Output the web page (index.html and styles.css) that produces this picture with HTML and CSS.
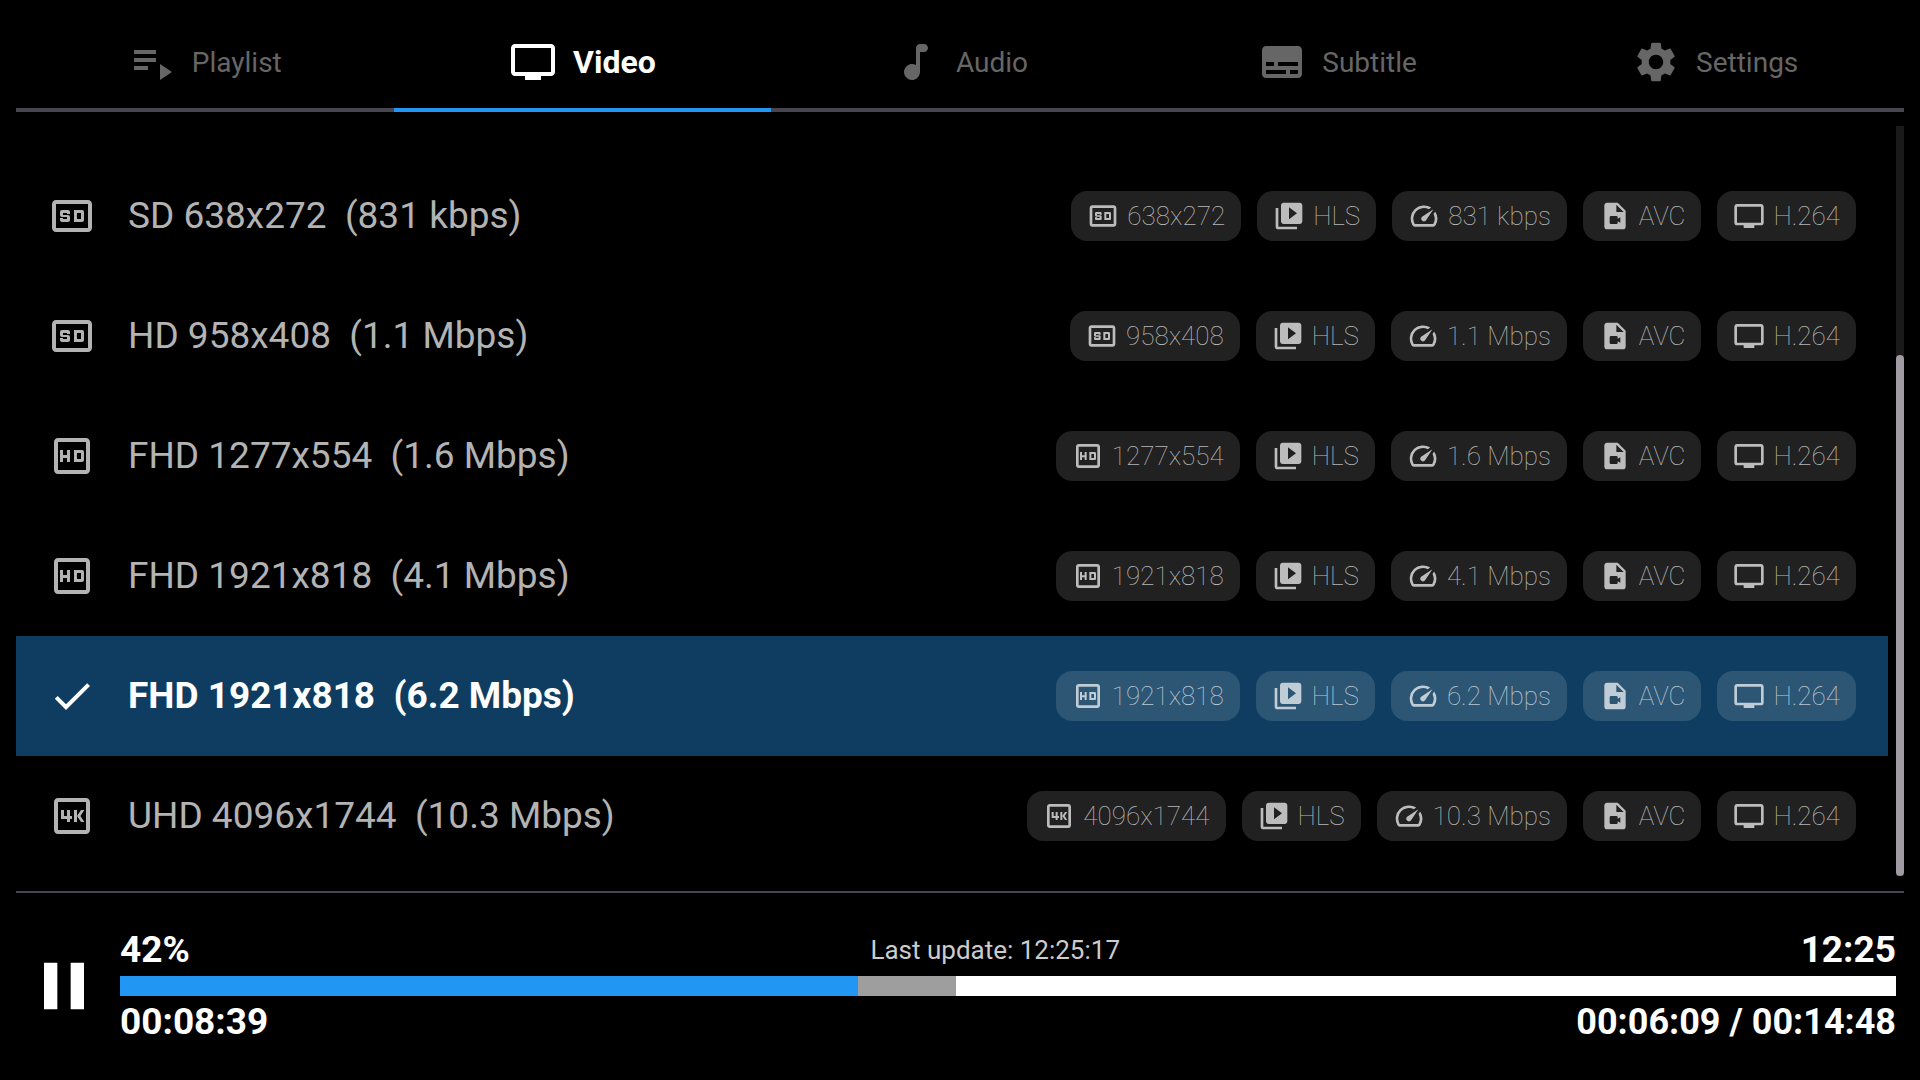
FILE: index.html
```html
<!DOCTYPE html>
<html lang="en">
<head>
<meta charset="utf-8">
<meta name="viewport" content="width=device-width, initial-scale=1">
<title>Video tracks</title>
<link rel="stylesheet" href="styles.css">
</head>
<body>
<svg class="sprite" aria-hidden="true">
  <symbol id="sd" viewBox="0 0 24 24"><path d="M20 4H4c-1.100 0-2 .9-2 2v12c0 1.100.9 2 2 2h16c1.100 0 2-.9 2-2V6c0-1.100-.9-2-2-2zm0 14H4V6h16v12zM7 15h3c.55 0 1-.45 1-1v-1.500c0-.55-.45-1-1-1H7.500v-1h2v.5H11V10c0-.55-.45-1-1-1H7c-.55 0-1 .45-1 1v1.500c0 .55.45 1 1 1h2.500v1h-2V13H6v1c0 .55.45 1 1 1zm11-1v-4c0-.55-.45-1-1-1h-4v6h4c.55 0 1-.45 1-1zm-1.500-.5h-2v-3h2v3z"/></symbol>
  <symbol id="hd" viewBox="0 0 24 24"><path d="M19 3H5c-1.110 0-2 .9-2 2v14c0 1.100.89 2 2 2h14c1.100 0 2-.9 2-2V5c0-1.100-.9-2-2-2zm0 16H5V5h14v14zM7.500 13h2v2H11V9H9.500v2.500h-2V9H6v6h1.500zm5.500 2h4c.55 0 1-.45 1-1v-4c0-.55-.45-1-1-1h-4v6zm1.500-4.500h2v3h-2v-3z"/></symbol>
  <symbol id="uhd" viewBox="0 0 24 24"><path d="M19 3H5c-1.110 0-2 .9-2 2v14c0 1.100.89 2 2 2h14c1.100 0 2-.9 2-2V5c0-1.100-.9-2-2-2zm0 16H5V5h14v14zM9.500 15H11v-1.500h1V12h-1V9H9.500v3H8V9H6.500v4.500h3zm8.700 0-2-3 2-3h-1.700l-2 3V9H13v6h1.500v-3l2 3z"/></symbol>
  <symbol id="tv" viewBox="0 0 24 24"><path d="M21 3H3c-1.100 0-2 .9-2 2v12c0 1.100.9 2 2 2h5v2h8v-2h5c1.100 0 2-.9 2-2V5c0-1.100-.9-2-2-2zm0 14H3V5h18v12z"/></symbol>
  <symbol id="library" viewBox="0 0 24 24"><path d="M4 6H2v14c0 1.100.9 2 2 2h14v-2H4V6zm16-4H8c-1.100 0-2 .9-2 2v12c0 1.100.9 2 2 2h12c1.100 0 2-.9 2-2V4c0-1.100-.9-2-2-2zm-8 12.500v-9l6 4.500-6 4.500z"/></symbol>
  <symbol id="speed" viewBox="0 0 24 24"><path d="M20.380 8.570l-1.230 1.850a8 8 0 0 1-.22 7.580H5.070A8 8 0 0 1 15.580 6.850l1.850-1.230A10 10 0 0 0 3.350 19a2 2 0 0 0 1.720 1h13.850a2 2 0 0 0 1.740-1 10 10 0 0 0-.27-10.440zm-9.790 6.840a2 2 0 0 0 2.830 0l5.660-8.490-8.490 5.660a2 2 0 0 0 0 2.830z"/></symbol>
  <symbol id="file" viewBox="0 0 24 24"><path d="M14 2H6.010c-1.100 0-2 .89-2 2L4 20c0 1.110.89 2 1.990 2H18c1.100 0 2-.9 2-2V8l-6-6zm-1 7V3.500L18.500 9H13zm1 5 2-1.060v4.120L14 16v1c0 .55-.45 1-1 1H9c-.55 0-1-.45-1-1v-4c0-.55.45-1 1-1h4c.55 0 1 .45 1 1v1z"/></symbol>
  <symbol id="check" viewBox="0 0 24 24"><path d="M9 16.170 4.830 12l-1.420 1.410L9 19 21 7l-1.410-1.410z"/></symbol>
  <symbol id="playlist" viewBox="0 0 24 24"><path d="M3 10h11v2H3zm0-4h11v2H3zm0 8h7v2H3zm13-1v8l6-4z"/></symbol>
  <symbol id="note" viewBox="0 0 24 24"><path d="M12 5v8.550c-.94-.54-2.100-.75-3.330-.32-1.340.48-2.370 1.670-2.610 3.070-.46 2.740 1.860 5.080 4.590 4.650 1.960-.31 3.350-2.110 3.350-4.100V7h2c1.100 0 2-.9 2-2s-.9-2-2-2h-2c-1.100 0-2 .9-2 2z"/></symbol>
  <symbol id="subtitles" viewBox="0 0 24 24"><path d="M20 4H4c-1.100 0-2 .9-2 2v12c0 1.100.9 2 2 2h16c1.100 0 2-.9 2-2V6c0-1.100-.9-2-2-2zM4 12h4v2H4v-2zm10 6H4v-2h10v2zm6 0h-4v-2h4v2zm0-4H10v-2h10v2z"/></symbol>
  <symbol id="gear" viewBox="0 0 24 24"><path d="M19.140 12.940c.04-.3.060-.61.060-.94 0-.32-.02-.64-.07-.94l2.030-1.580c.18-.14.23-.41.120-.61l-1.920-3.320c-.12-.22-.37-.29-.59-.22l-2.390.96c-.5-.38-1.030-.7-1.620-.94l-.36-2.540c-.04-.24-.24-.41-.48-.41h-3.840c-.24 0-.43.17-.47.41l-.36 2.540c-.59.24-1.130.57-1.620.94l-2.390-.96c-.22-.08-.47 0-.59.22L2.740 8.870c-.12.21-.08.47.120.61l2.030 1.580c-.05.3-.09.63-.09.94s.02.64.070.94l-2.030 1.580c-.18.14-.23.41-.12.61l1.920 3.320c.12.22.37.29.59.22l2.390-.96c.5.38 1.030.7 1.620.94l.36 2.540c.05.24.24.41.48.41h3.840c.24 0 .44-.17.47-.41l.36-2.540c.59-.24 1.130-.56 1.620-.94l2.390.96c.22.08.47 0 .59-.22l1.920-3.320c.12-.22.070-.47-.12-.61l-2.010-1.580zM12 15.600c-1.980 0-3.600-1.620-3.600-3.600s1.620-3.600 3.600-3.600 3.600 1.620 3.600 3.600-1.620 3.600-3.600 3.600z"/></symbol>
  <symbol id="pause" viewBox="0 0 24 24"><path d="M6 19h4V5H6v14zm8-14v14h4V5h-4z"/></symbol>
</svg>
<div class="player">
  <nav class="tabs" aria-label="Player menu">
    <button class="tab"><svg class="icon"><use href="#playlist"/></svg>Playlist</button>
    <button class="tab tab-active" aria-current="true"><svg class="icon"><use href="#tv"/></svg>Video</button>
    <button class="tab"><svg class="icon"><use href="#note"/></svg>Audio</button>
    <button class="tab"><svg class="icon"><use href="#subtitles"/></svg>Subtitle</button>
    <button class="tab"><svg class="icon"><use href="#gear"/></svg>Settings</button>
  </nav>
  <main class="panel">
    <div class="tracks" id="tracks"></div>
    <div class="scrollbar"><div class="scroll-thumb"></div></div>
  </main>
  <footer class="controls">
    <button class="pause" aria-label="Pause"><svg class="pause-icon"><use href="#pause"/></svg></button>
    <div class="timeline">
      <div class="labels"><span class="strong">42%</span><span class="update">Last update: 12:25:17</span><span class="strong">12:25</span></div>
      <div class="bar" role="progressbar" aria-label="Position" aria-valuenow="42" aria-valuemin="0" aria-valuemax="100">
        <div class="buffered" style="width:47.1%"></div>
        <div class="played" style="width:41.55%"></div>
      </div>
      <div class="labels"><span class="strong">00:08:39</span><span class="strong total">00:06:09 / 00:14:48</span></div>
    </div>
  </footer>
</div>
<script src="script.js"></script>
</body>
</html>
```
FILE: styles.css
```css
* { box-sizing: border-box; }

body {
  margin: 0;
  background: #000;
  color: #fff;
  font-family: Roboto, "Liberation Sans", sans-serif;
}

button {
  border: 0;
  padding: 0;
  background: none;
  color: inherit;
  font: inherit;
}

svg { fill: currentColor; flex: none; }

.sprite { display: none; }

.player {
  display: flex;
  flex-direction: column;
  min-height: 100vh;
  padding: 16px 16px 0;
}

.tabs {
  display: grid;
  grid-template-columns: repeat(5, 1fr);
}

.tab {
  display: flex;
  align-items: center;
  justify-content: center;
  gap: 16px;
  height: 96px;
  border-bottom: 4px solid #49454f;
  color: #666;
  font-size: 28px;
}

.tab-active {
  border-color: #2196f3;
  color: #fff;
  font-size: 32px;
  font-weight: 700;
}

.icon { width: 48px; height: 48px; }

.panel {
  display: flex;
  flex: 1;
  gap: 8px;
  padding: 14px 0 15px;
}

.tracks {
  display: flex;
  flex: 1;
  flex-direction: column;
  justify-content: flex-end;
}

.track {
  display: flex;
  align-items: center;
  gap: 32px;
  width: 100%;
  height: 120px;
  padding: 0 32px;
  color: #b3b3b3;
  font-size: 37px;
  line-height: 42px;
  text-align: left;
}

.track-selected {
  background: #0e3d61;
  color: #fff;
  font-weight: 700;
}

.title { flex: 1; white-space: pre; }

.chips { display: flex; gap: 16px; }

.chip {
  display: flex;
  align-items: center;
  gap: 8px;
  height: 50px;
  padding: 0 16px;
  border-radius: 16px;
  background: rgba(255, 255, 255, 0.13);
  color: rgba(255, 255, 255, 0.7);
  font-size: 26px;
  font-weight: 100;
}

.chip-icon { width: 32px; height: 32px; }

.scrollbar {
  display: flex;
  align-items: flex-end;
  width: 8px;
  background: #1a1a1a;
}

.scroll-thumb {
  width: 8px;
  height: 69.5%;
  border-radius: 4px;
  background: #a09aa2;
}

.controls {
  display: flex;
  align-items: center;
  height: 189px;
  padding: 0 8px 2px 0;
  border-top: 2px solid #49454f;
}

.pause { display: flex; padding: 0 8px; margin-right: 8px; }

.pause-icon { width: 80px; height: 80px; }

.timeline { flex: 1; }

.labels {
  display: flex;
  align-items: center;
  justify-content: space-between;
  height: 52px;
}

.strong { font-size: 37px; font-weight: 700; }

.total { font-size: 36px; }

.update { color: #ccc; font-size: 26px; }

.bar {
  display: grid;
  height: 20px;
  background: #fff;
}

.buffered, .played { grid-area: 1 / 1; }

.buffered { background: #9e9e9e; }

.played { background: #2196f3; }
```
FILE: script.js
```js
const tracks = [
  { icon: "sd", name: "SD", size: "638x272", rate: "831 kbps" },
  { icon: "sd", name: "HD", size: "958x408", rate: "1.1 Mbps" },
  { icon: "hd", name: "FHD", size: "1277x554", rate: "1.6 Mbps" },
  { icon: "hd", name: "FHD", size: "1921x818", rate: "4.1 Mbps" },
  { icon: "hd", name: "FHD", size: "1921x818", rate: "6.2 Mbps", selected: true },
  { icon: "uhd", name: "UHD", size: "4096x1744", rate: "10.3 Mbps" }
];

const chip = (icon, text) =>
  `<span class="chip"><svg class="chip-icon"><use href="#${icon}"/></svg>${text}</span>`;

document.getElementById("tracks").innerHTML = tracks.map(t => `
  <button class="track${t.selected ? " track-selected" : ""}" aria-pressed="${!!t.selected}">
    <svg class="icon"><use href="#${t.selected ? "check" : t.icon}"/></svg>
    <span class="title">${t.name} ${t.size}  (${t.rate})</span>
    <span class="chips">${chip(t.icon, t.size)}${chip("library", "HLS")}${chip("speed", t.rate)}${chip("file", "AVC")}${chip("tv", "H.264")}</span>
  </button>`).join("");
```
